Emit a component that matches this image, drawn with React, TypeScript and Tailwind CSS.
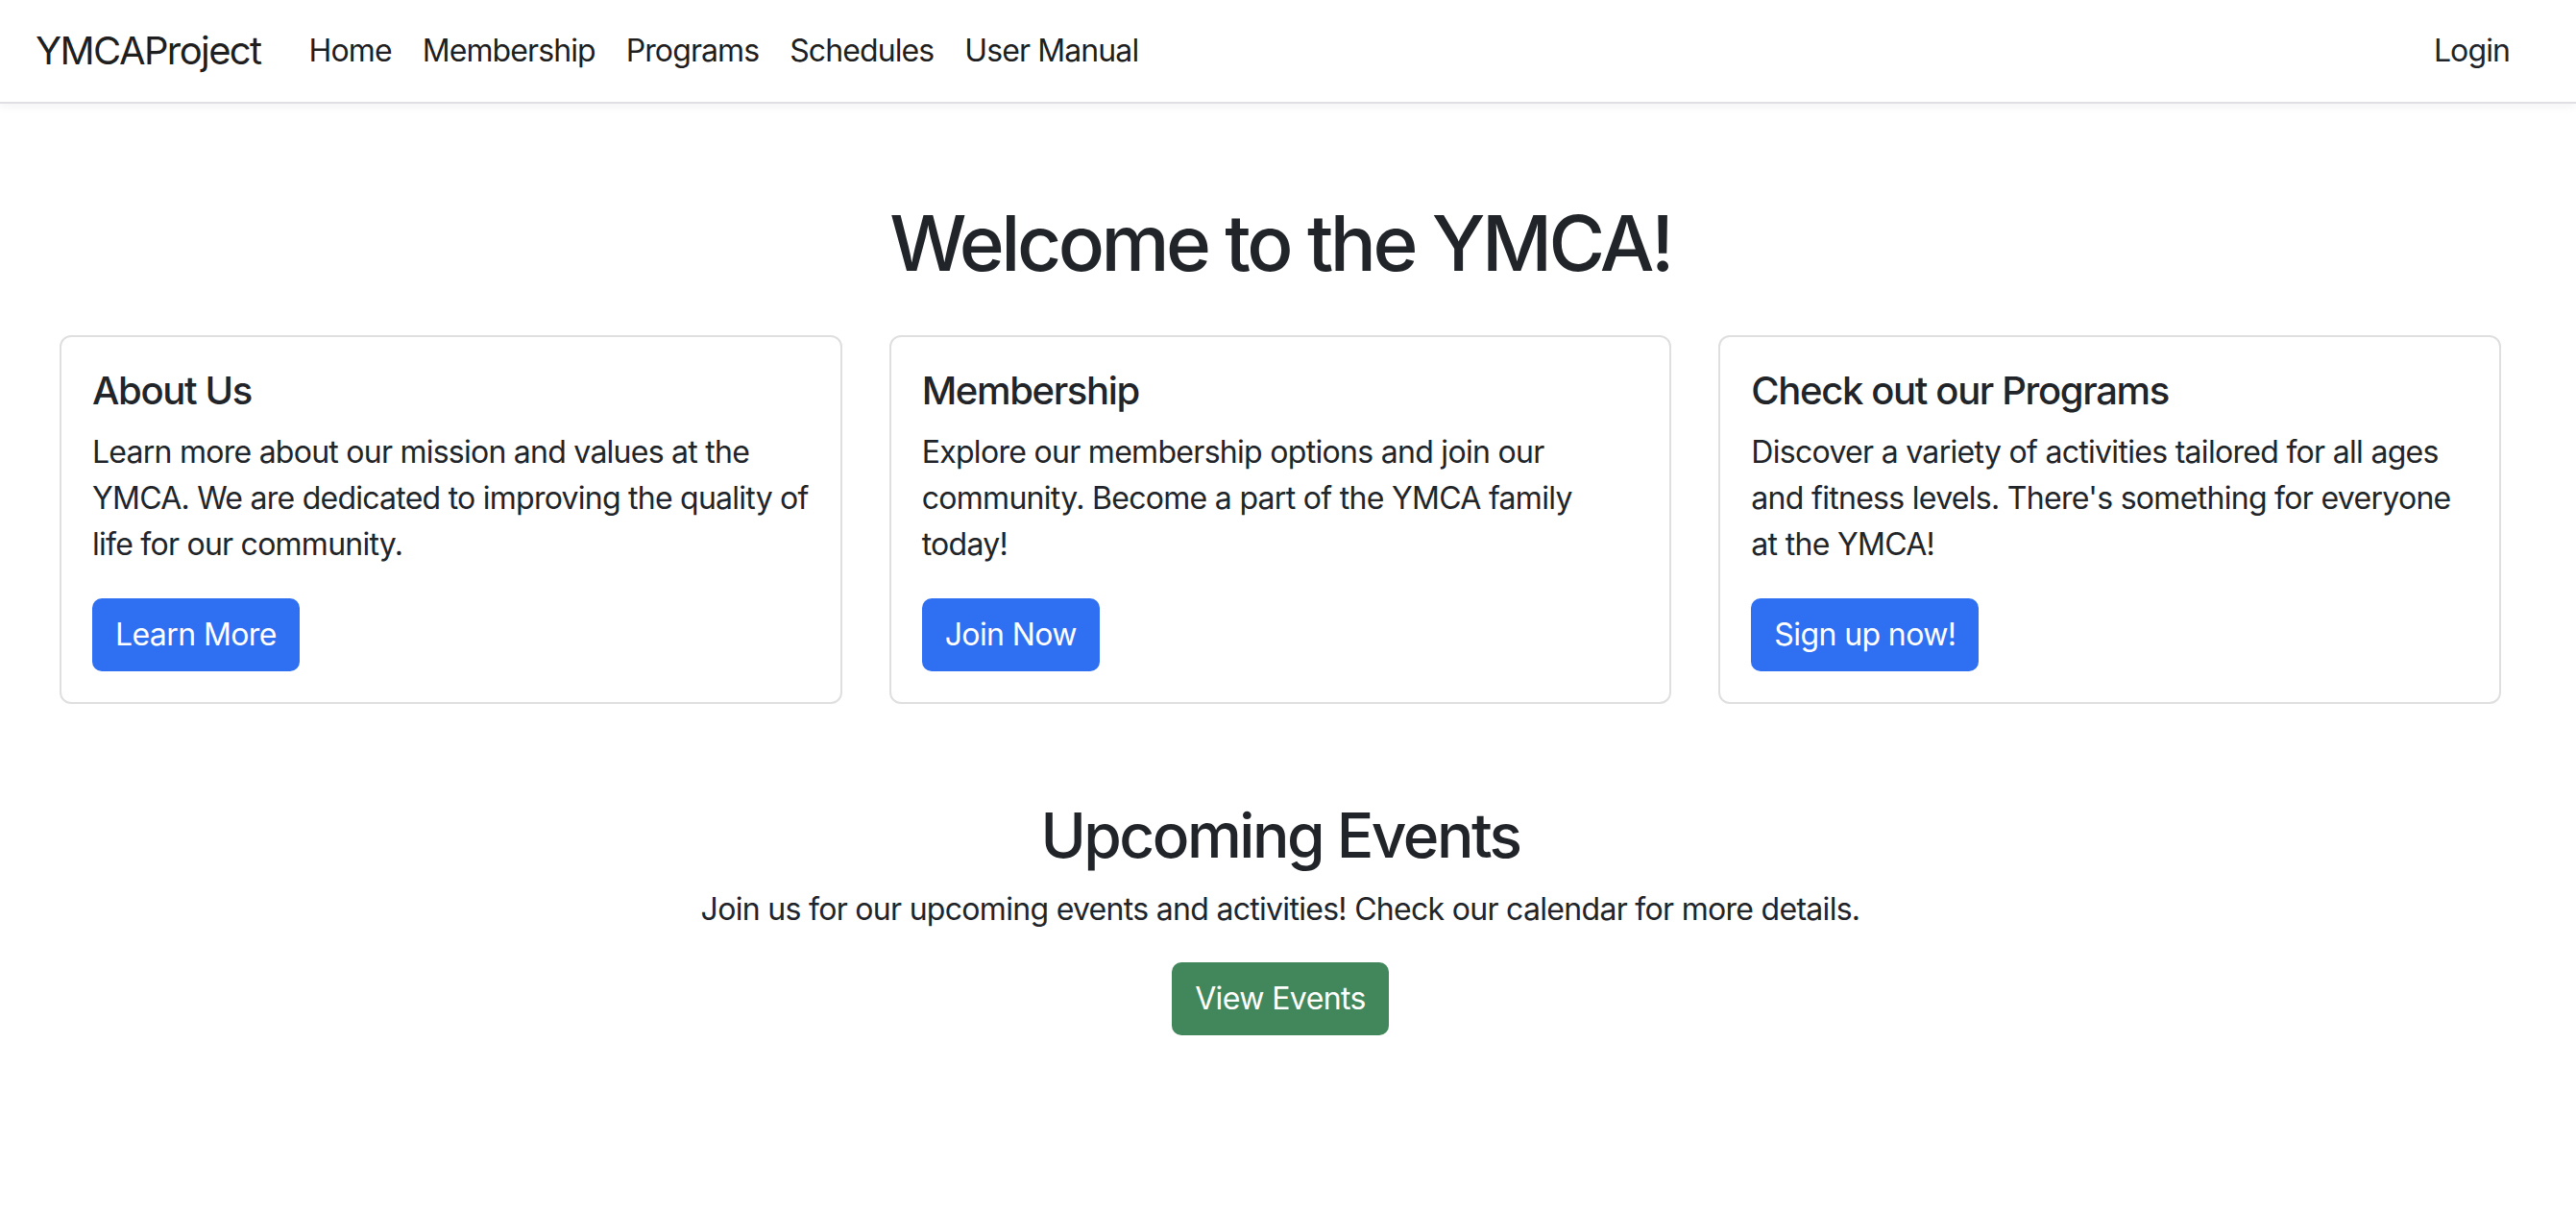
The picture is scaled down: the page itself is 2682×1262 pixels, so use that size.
import React from 'react';

type Card = { title: string; lines: string[]; cta: string; pClass: string };

const cards: Card[] = [
  {
    title: 'About Us',
    // explicit breaks so the wrap matches the reference's narrower system font
    lines: [
      'Learn more about our mission and values at the',
      'YMCA. We are dedicated to improving the quality of',
      'life for our community.',
    ],
    cta: 'Learn More',
    pClass: 'tracking-[-0.75px] mr-[-24px]',
  },
  {
    title: 'Membership',
    lines: ['Explore our membership options and join our community. Become a part of the YMCA family today!'],
    cta: 'Join Now',
    pClass: 'tracking-[-0.7px]',
  },
  {
    title: 'Check out our Programs',
    lines: ["Discover a variety of activities tailored for all ages and fitness levels. There's something for everyone at the YMCA!"],
    cta: 'Sign up now!',
    pClass: 'tracking-[-0.7px]',
  },
];

const navLinks = ['Home', 'Membership', 'Programs', 'Schedules', 'User Manual'];

const App: React.FC = () => {
  return (
    <div className="min-h-screen bg-white text-[#212529] font-['Inter',sans-serif]">
      {/* Navbar */}
      <nav className="flex items-center justify-between h-[108px] pl-[37px] pr-[53px] border-b-2 border-[#e0e0e4] shadow-[0_3px_10px_rgba(0,0,0,0.05)]">
        <div className="flex items-center">
          <a className="text-[40px] leading-[60px] text-black/90 mr-[34px] tracking-[-1.6px]">YMCAProject</a>
          <ul className="flex items-center">
            {navLinks.map((l) => (
              <li key={l}>
                <a className="block px-[16px] py-[16px] text-[32px] leading-[48px] text-black/90 tracking-[-0.9px]">{l}</a>
              </li>
            ))}
          </ul>
        </div>
        <a className="block px-[16px] py-[16px] text-[32px] leading-[48px] text-[#212529] tracking-[-0.9px]">Login</a>
      </nav>

      {/* Hero */}
      <main className="mr-[16px]">
        <h1 className="text-center text-[80px] leading-[96px] font-medium mt-[97px] mb-[48px] tracking-[-3.5px]">
          Welcome to the YMCA!
        </h1>

        <div className="grid grid-cols-3 gap-[49px] px-[62px]">
          {cards.map((c) => (
            <div key={c.title} className="border-2 border-[#dfdfdf] rounded-[12px] p-[32px]">
              <h5 className="text-[40px] leading-[48px] font-medium mb-[16px] tracking-[-1.35px]">{c.title}</h5>
              <p className={`text-[32px] leading-[48px] mb-[32px] ${c.pClass}`}>
                {c.lines.map((line, i) => (
                  <React.Fragment key={i}>
                    {i > 0 && <br />}
                    {line}
                  </React.Fragment>
                ))}
              </p>
              <button className="h-[76px] px-[24px] text-[32px] leading-[48px] text-white bg-[#2f70f3] rounded-[10px] tracking-[-0.6px]">
                {c.cta}
              </button>
            </div>
          ))}
        </div>

        <section className="text-center mt-[98px]">
          <h2 className="text-[64px] leading-[77px] font-medium mb-[15px] tracking-[-2.5px]">Upcoming Events</h2>
          <p className="text-[32px] leading-[48px] mb-[31px] tracking-[-0.7px]">
            Join us for our upcoming events and activities! Check our calendar for more details.
          </p>
          <button className="h-[76px] px-[24px] text-[32px] leading-[48px] text-white bg-[#41875b] rounded-[10px] tracking-[-0.6px]">
            View Events
          </button>
        </section>
      </main>
    </div>
  );
};

export default App;
